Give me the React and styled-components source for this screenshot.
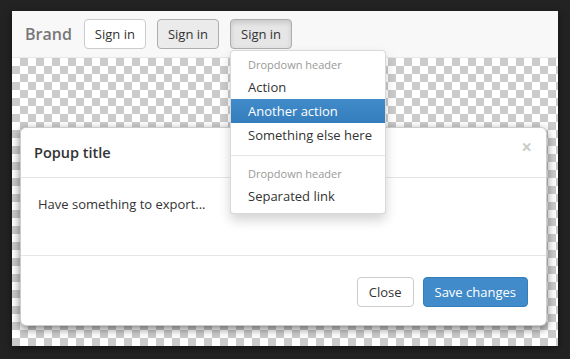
import styled, { createGlobalStyle } from "styled-components";

const GlobalStyle = createGlobalStyle`
  html, body {
    margin: 0;
    padding: 0;
    background: #232323;
  }
  body {
    font-family: "Open Sans", "Liberation Sans", sans-serif;
    font-size: 13px;
    color: #333;
  }
`;

const Frame = styled.div`
  width: 570px;
  height: 359px;
  padding: 11px 12px 13px 12px;
  box-sizing: border-box;
`;

const Canvas = styled.div`
  display: flex;
  flex-direction: column;
  height: 100%;
  background: #f8f8f8;
  box-shadow: 0 2px 8px rgba(0, 0, 0, 0.5);
`;

const Navbar = styled.div`
  display: flex;
  align-items: center;
  height: 46px;
  padding: 0 13px;
  background: #f8f8f8;
  border-bottom: 1px solid #e7e7e7;
`;

const Brand = styled.span`
  font-size: 16px;
  font-weight: 600;
  color: #777;
  margin-right: 12px;
`;

const NavButton = styled.button`
  font-family: inherit;
  font-size: 13px;
  color: #333;
  height: 30px;
  padding: 0 10px;
  margin-right: 11px;
  border-radius: 4px;
  border: 1px solid ${(p) => (p.$state === "idle" ? "#ccc" : "#adadad")};
  background: ${(p) =>
    p.$state === "idle" ? "#fff" : p.$state === "hover" ? "#ebebeb" : "#e6e6e6"};
  box-shadow: ${(p) =>
    p.$state === "active" ? "inset 0 3px 5px rgba(0, 0, 0, 0.125)" : "none"};
`;

const DropWrap = styled.div`
  position: relative;
`;

const Menu = styled.ul`
  position: absolute;
  top: calc(100% + 1px);
  left: 0;
  z-index: 10;
  width: 156px;
  box-sizing: border-box;
  margin: 0;
  padding: 4px 0 5px;
  list-style: none;
  background: #fff;
  border: 1px solid rgba(0, 0, 0, 0.15);
  border-radius: 4px;
  box-shadow: 0 6px 12px rgba(0, 0, 0, 0.175);
`;

const MenuHeader = styled.li`
  height: 20px;
  line-height: 20px;
  padding: 0 17px;
  font-size: 11px;
  color: #999;
`;

const MenuItem = styled.li`
  height: 24px;
  line-height: 24px;
  padding: 0 17px;
  font-size: 13px;
  white-space: nowrap;
  color: ${(p) => (p.$active ? "#fff" : "#333")};
  background: ${(p) =>
    p.$active ? "linear-gradient(to bottom, #428bca, #357ebd)" : "transparent"};
`;

const Divider = styled.li`
  height: 1px;
  margin: 8px 0;
  background: #e5e5e5;
`;

const Stage = styled.div`
  flex: 1;
  padding: 69px 11px 0 8px;
  background: repeating-conic-gradient(#cbcbcb 0 25%, #fff 0 50%) 0 0 / 16px 16px;
`;

const Modal = styled.div`
  background: #fff;
  border: 1px solid rgba(0, 0, 0, 0.2);
  border-radius: 6px;
  box-shadow: 0 3px 9px rgba(0, 0, 0, 0.5);
`;

const ModalHeader = styled.div`
  display: flex;
  align-items: center;
  justify-content: space-between;
  height: 49px;
  padding: 0 14px 0 13px;
  border-bottom: 1px solid #e5e5e5;
`;

const Title = styled.h4`
  margin: 0;
  font-size: 14.5px;
  font-weight: 600;
  color: #333;
`;

const CloseX = styled.span`
  font-size: 19px;
  font-weight: 700;
  line-height: 1;
  color: #000;
  opacity: 0.2;
  margin-top: -10px;
`;

const ModalBody = styled.div`
  padding: 16px 17px 41px;
  line-height: 20px;
  font-size: 13px;
`;

const ModalFooter = styled.div`
  display: flex;
  justify-content: flex-end;
  gap: 9px;
  padding: 21px 18px 18px;
  border-top: 1px solid #e5e5e5;
`;

const Button = styled.button`
  font-family: inherit;
  font-size: 13px;
  height: 30px;
  padding: 0 11px;
  border-radius: 4px;
  border: 1px solid ${(p) => (p.$primary ? "#357ebd" : "#ccc")};
  background: ${(p) => (p.$primary ? "#428bca" : "#fff")};
  color: ${(p) => (p.$primary ? "#fff" : "#333")};
`;

export default function App() {
  return (
    <>
      <GlobalStyle />
      <Frame>
        <Canvas>
          <Navbar>
            <Brand>Brand</Brand>
            <NavButton $state="idle">Sign in</NavButton>
            <NavButton $state="hover">Sign in</NavButton>
            <DropWrap>
              <NavButton $state="active">Sign in</NavButton>
              <Menu>
                <MenuHeader>Dropdown header</MenuHeader>
                <MenuItem>Action</MenuItem>
                <MenuItem $active>Another action</MenuItem>
                <MenuItem>Something else here</MenuItem>
                <Divider />
                <MenuHeader>Dropdown header</MenuHeader>
                <MenuItem>Separated link</MenuItem>
              </Menu>
            </DropWrap>
          </Navbar>
          <Stage>
            <Modal>
              <ModalHeader>
                <Title>Popup title</Title>
                <CloseX>×</CloseX>
              </ModalHeader>
              <ModalBody>Have something to export...</ModalBody>
              <ModalFooter>
                <Button>Close</Button>
                <Button $primary>Save changes</Button>
              </ModalFooter>
            </Modal>
          </Stage>
        </Canvas>
      </Frame>
    </>
  );
}
